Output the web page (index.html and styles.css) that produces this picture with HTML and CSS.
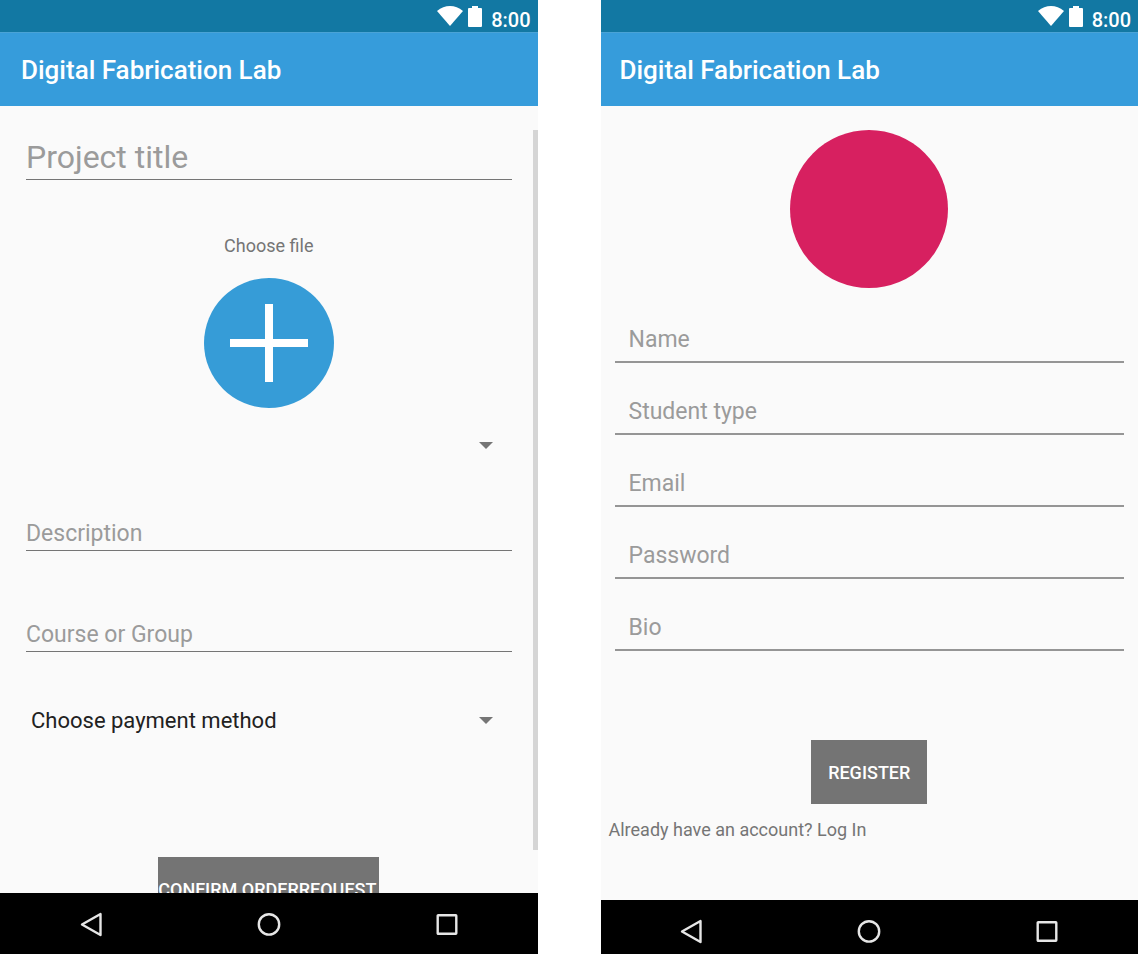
FILE: index.html
```html
<!DOCTYPE html>
<html lang="en">
<head>
<meta charset="utf-8">
<meta name="viewport" content="width=device-width, initial-scale=1">
<title>Digital Fabrication Lab</title>
<link rel="stylesheet" href="styles.css">
</head>
<body>
<svg class="sprite" aria-hidden="true">
  <symbol id="wifi" viewBox="0 0 26 20"><path d="M0 5Q6 0 13 0t13 5L13 20z"/></symbol>
  <symbol id="battery" viewBox="0 0 14 21"><path d="M4 0h6v2h3q1 0 1 1v17q0 1-1 1H1q-1 0-1-1V3q0-1 1-1h3z"/></symbol>
  <symbol id="back" viewBox="0 0 26 26"><path d="M4 13.500L22.500 3v21z"/></symbol>
  <symbol id="home" viewBox="0 0 26 26"><circle cx="13" cy="13.400" r="10.200"/></symbol>
  <symbol id="recent" viewBox="0 0 26 26"><rect x="3.700" y="4.200" width="18.600" height="18.600" rx="0.500"/></symbol>
</svg>
<main class="screens">
  <section class="screen">
    <div class="status">
      <svg class="wifi"><use href="#wifi"/></svg>
      <svg class="battery"><use href="#battery"/></svg>
      <span>8:00</span>
    </div>
    <header class="appbar"><h1>Digital Fabrication Lab</h1></header>
    <form class="content order">
      <input class="field field-title" type="text" placeholder="Project title" aria-label="Project title">
      <label class="file-label" for="add-file">Choose file</label>
      <button class="add" id="add-file" type="button" aria-label="Choose file">
        <svg viewBox="0 0 130 130"><path d="M26 65h78M65 26v78"/></svg>
      </button>
      <select class="spinner" aria-label="Material"><option></option></select>
      <input class="field field-description" type="text" placeholder="Description" aria-label="Description">
      <input class="field field-group" type="text" placeholder="Course or Group" aria-label="Course or Group">
      <select class="spinner spinner-payment" aria-label="Payment method"><option>Choose payment method</option></select>
      <button class="button confirm" type="submit">CONFIRM ORDERREQUEST</button>
      <span class="scrollbar"></span>
    </form>
    <nav class="navbar">
      <button type="button" aria-label="Back"><svg><use href="#back"/></svg></button>
      <button type="button" aria-label="Home"><svg><use href="#home"/></svg></button>
      <button type="button" aria-label="Recent apps"><svg><use href="#recent"/></svg></button>
    </nav>
  </section>
  <section class="screen">
    <div class="status">
      <svg class="wifi"><use href="#wifi"/></svg>
      <svg class="battery"><use href="#battery"/></svg>
      <span>8:00</span>
    </div>
    <header class="appbar appbar-register"><h1>Digital Fabrication Lab</h1></header>
    <form class="content register">
      <div class="avatar"></div>
      <div class="fields">
        <input class="field" type="text" placeholder="Name" aria-label="Name">
        <input class="field" type="text" placeholder="Student type" aria-label="Student type">
        <input class="field" type="email" placeholder="Email" aria-label="Email">
        <input class="field" type="password" placeholder="Password" aria-label="Password">
        <input class="field" type="text" placeholder="Bio" aria-label="Bio">
      </div>
      <button class="button submit" type="submit">REGISTER</button>
      <a class="login" href="#login">Already have an account? Log In</a>
    </form>
    <nav class="navbar navbar-short">
      <button type="button" aria-label="Back"><svg><use href="#back"/></svg></button>
      <button type="button" aria-label="Home"><svg><use href="#home"/></svg></button>
      <button type="button" aria-label="Recent apps"><svg><use href="#recent"/></svg></button>
    </nav>
  </section>
</main>
</body>
</html>
```
FILE: styles.css
```css
* { box-sizing: border-box; }
body { margin: 0; background: #fff; font-family: Roboto, sans-serif; }
button, input, select { font: inherit; margin: 0; padding: 0; border: 0; border-radius: 0; background: none; }
.sprite { position: absolute; width: 0; height: 0; }

.screens { display: grid; grid-template-columns: 1fr 1fr; gap: 63px; height: 100vh; }
.screen { display: flex; flex-direction: column; min-width: 0; min-height: 0; overflow: hidden; background: #fafafa; }

.status { flex: none; display: flex; justify-content: flex-end; height: 32px; padding: 6px 7px 0 0; background: #1278a3; color: #fff; }
.status svg { fill: #fff; }
.status span { font-size: 20px; line-height: 28px; font-weight: 500; }
.wifi { width: 26px; height: 20px; margin-right: 5px; }
.battery { width: 14px; height: 21px; margin-right: 9px; }

.appbar { flex: none; display: flex; align-items: center; height: 74px; padding: 0 22px 0 21px; border-top: 1px solid #4aa3d6; background: #369cdb; color: #fff; }
.appbar-register { padding-left: 19px; }
.appbar h1 { margin: 0; font-size: 26px; line-height: 32px; font-weight: 500; white-space: nowrap; }

.content { position: relative; flex: 1; min-height: 0; display: flex; flex-direction: column; align-items: center; overflow: hidden; }
.field { flex: none; width: 100%; height: 40px; border-bottom: 1px solid #757575; color: #212121; font-size: 23px; outline: 0; }
.field::placeholder { color: #9b9b9b; opacity: 1; }

.order { padding: 24px 26px 0; }
.order .field { padding-top: 6px; }
.order .field-title { height: 50px; padding-top: 4px; font-size: 32px; }
.file-label { margin-top: 54px; color: #757575; font-size: 18px; line-height: 24px; }
.add { flex: none; width: 130px; height: 130px; margin-top: 20px; border-radius: 50%; background: #369cd7; }
.add svg { display: block; fill: none; stroke: #fff; stroke-width: 8; }
.spinner { flex: none; width: 100%; height: 40px; margin-top: 17px; padding: 0 5px; appearance: none; color: #212121; font-size: 22px;
  background: url("data:image/svg+xml,%3Csvg xmlns='http://www.w3.org/2000/svg' width='14' height='7'%3E%3Cpath d='M0 0h14L7 7z' fill='%23757575'/%3E%3C/svg%3E") no-repeat right 19px center; }
.field-description { margin-top: 46px; }
.field-group { margin-top: 61px; }
.spinner-payment { margin-top: 48px; }
.button { flex: none; background: #747474; color: #fff; font-size: 18px; font-weight: 500; white-space: nowrap; }
.confirm { width: 221px; height: 64px; margin-top: 117px; text-align: left; }
.scrollbar { position: absolute; top: 24px; right: 0; bottom: 43px; width: 5px; background: #d5d5d5; }

.register { padding: 24px 14px 0; }
.avatar { flex: none; width: 158px; height: 158px; border-radius: 50%; background: #d72060; }
.fields { display: grid; gap: 32px; width: 100%; margin-top: 35px; }
.register .field { padding: 0 14px 6px; border-bottom: 2px solid #959595; }
.submit { width: 116px; height: 64px; margin-top: 89px; }
.login { align-self: flex-start; margin: 14px 0 0 -6px; color: #757575; font-size: 18px; line-height: 24px; text-decoration: none; }

.navbar { flex: none; display: flex; justify-content: center; gap: 152px; height: 61px; padding-top: 18px; background: #000; }
.navbar-short { height: 54px; }
.navbar button { width: 26px; height: 26px; }
.navbar svg { display: block; width: 26px; height: 26px; fill: none; stroke: #e6e6e6; stroke-width: 2.400; stroke-linejoin: round; }
```
